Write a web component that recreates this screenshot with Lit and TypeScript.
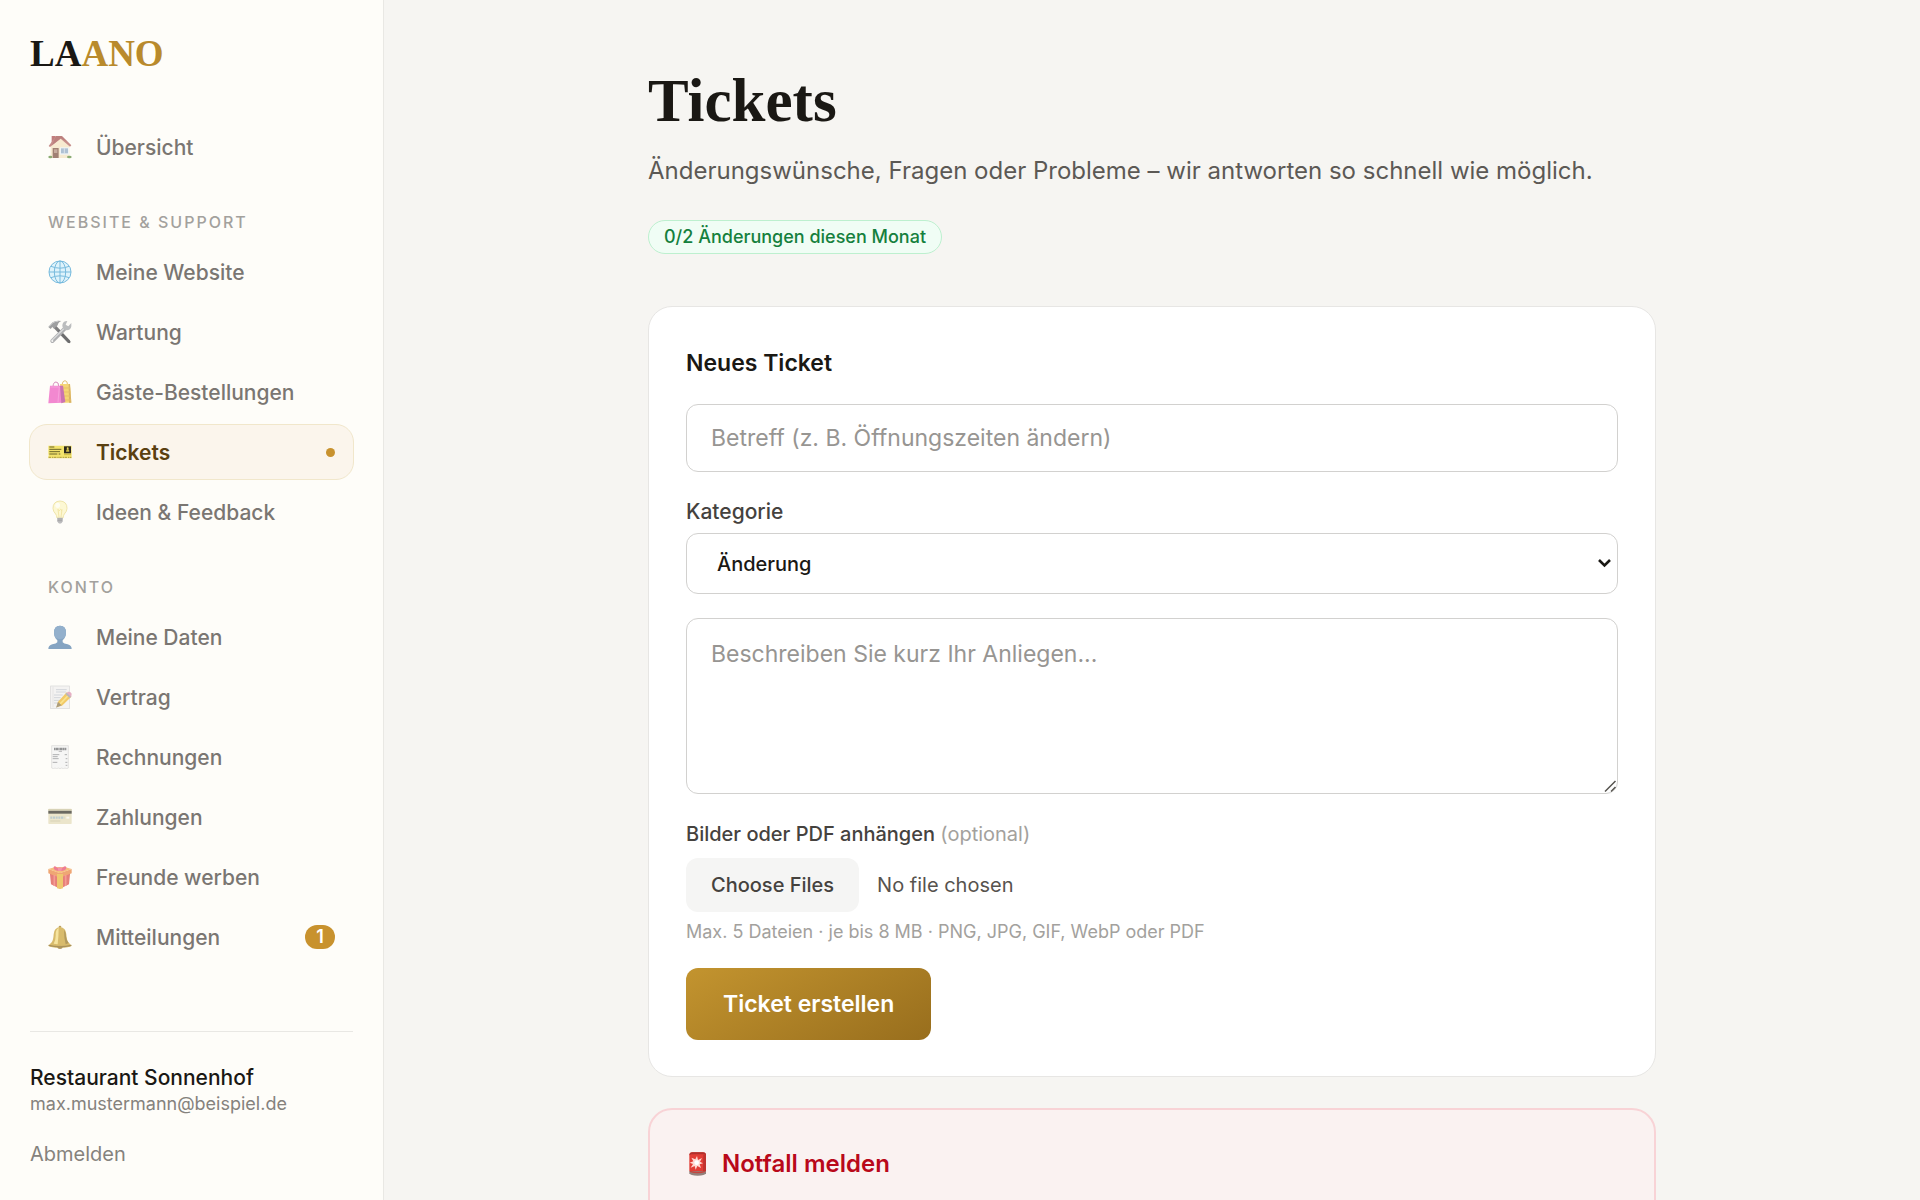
import { LitElement, html, svg, css, nothing, type SVGTemplateResult } from "lit";
import { customElement, property } from "lit/decorators.js";
import { classMap } from "lit/directives/class-map.js";

interface NavEntry {
  label: string;
  icon: string;
  href: string;
  active?: boolean;
  count?: number;
}

interface NavGroup {
  title?: string;
  entries: NavEntry[];
}

const NAV: NavGroup[] = [
  { entries: [{ label: "Übersicht", icon: "house", href: "#uebersicht" }] },
  {
    title: "Website & Support",
    entries: [
      { label: "Meine Website", icon: "globe", href: "#website" },
      { label: "Wartung", icon: "tools", href: "#wartung" },
      { label: "Gäste-Bestellungen", icon: "bags", href: "#bestellungen" },
      { label: "Tickets", icon: "ticket", href: "#tickets", active: true },
      { label: "Ideen & Feedback", icon: "bulb", href: "#ideen" },
    ],
  },
  {
    title: "Konto",
    entries: [
      { label: "Meine Daten", icon: "person", href: "#daten" },
      { label: "Vertrag", icon: "memo", href: "#vertrag" },
      { label: "Rechnungen", icon: "receipt", href: "#rechnungen" },
      { label: "Zahlungen", icon: "card", href: "#zahlungen" },
      { label: "Freunde werben", icon: "gift", href: "#freunde" },
      { label: "Mitteilungen", icon: "bell", href: "#mitteilungen", count: 1 },
    ],
  },
];

/* Every drawing uses a 72 unit square. */
const ICONS: Record<string, SVGTemplateResult> = {
  house: svg`
    <rect x="11" y="3" width="12" height="22" fill="#a8484a"/>
    <path d="M8 33 37 8l27 25v36H8z" fill="#f5e3c0"/>
    <path d="M2 33 24 3h18l28 28-4 4L38 11 6 36z" fill="#b0605c"/>
    <path d="M24 3h16L58 20 38 10 12 31z" fill="#a04c4a"/>
    <rect x="14" y="39" width="18" height="30" fill="#7b4e3c"/>
    <rect x="18" y="43" width="10" height="11" fill="#b08a78"/>
    <rect x="36" y="37" width="27" height="22" fill="#e9f0f6"/>
    <rect x="39" y="40" width="21" height="15" fill="#8fa9c4"/>
    <path d="M49 40v15" stroke="#e9f0f6" stroke-width="2"/>
    <ellipse cx="7" cy="66" rx="6" ry="4" fill="#5d8a3c"/>
    <ellipse cx="64" cy="66" rx="7" ry="4" fill="#5d8a3c"/>`,
  globe: svg`
    <circle cx="36" cy="36" r="33" fill="#d3effc"/>
    <g fill="none" stroke="#3f9fd2" stroke-width="3">
      <circle cx="36" cy="36" r="33"/>
      <ellipse cx="36" cy="36" rx="17" ry="33"/>
      <path d="M36 3v66M3 36h66M9 19q27 11 54 0M9 53q27-11 54 0"/>
    </g>`,
  tools: svg`
    <path d="M20 20 62 64" stroke="#4a4b4e" stroke-width="10" stroke-linecap="round"/>
    <path d="M34 34 64 66" stroke="#2f3032" stroke-width="7" stroke-linecap="round"/>
    <path d="M1 21 14 7Q24 0 40 3 30 7 29 16L18 26l-5-5-5 6z" fill="#77797c"/>
    <path d="M3 20 15 8q7-5 16-4" fill="none" stroke="#b9bbbe" stroke-width="3"/>
    <path d="M51 25 13 63" stroke="#8d8f93" stroke-width="12" stroke-linecap="round"/>
    <path d="M49 25 12 61" stroke="#c9cbce" stroke-width="4" stroke-linecap="round"/>
    <path d="M58 3Q44 3 43 16q0 14 13 15 12 0 14-12V9l-9 10-8-5z" fill="#a0a2a6"/>
    <circle cx="13" cy="63" r="3" fill="#f2f2f2"/>`,
  bags: svg`
    <path d="M42 14q2-12 9-12t8 13" fill="none" stroke="#d7a73f" stroke-width="3"/>
    <path d="M36 12h30l4 56H44z" fill="#f2c53d"/>
    <path d="M62 12h4l4 56h-7z" fill="#c9952a"/>
    <path d="M44 24h22M45 36h22M47 48h21M48 60h21" stroke="#dfa529" stroke-width="3"/>
    <path d="M15 20q1-14 9-14t8 12" fill="none" stroke="#c45fa4" stroke-width="3"/>
    <path d="M6 17h35l2 51-42 2z" fill="#ee58c0"/>
    <path d="M36 17h9l7 49-12 4z" fill="#b53a93"/>
    <path d="M8 21h26l-4 45" fill="none" stroke="#f78dd6" stroke-width="2"/>`,
  ticket: svg`
    <path d="M1 17h70v8q-3 3 0 6v24H1v-6q3-3 0-6z" fill="#f3e36c"/>
    <path d="M4 21h15M4 28h36M4 35h32M4 42h24M32 42h5" stroke="#6b6528" stroke-width="3"/>
    <rect x="48" y="19" width="21" height="21" fill="#2b281f"/>
    <path d="M54 35q0-7 5-9 6 2 5 9z" fill="#c9b646"/>
    <circle cx="59" cy="25" r="3" fill="#e8d556"/>
    <path d="M2 52h68" stroke="#ab9a40" stroke-width="3" stroke-dasharray="7 3 4 2"/>
    <path d="M48 44h21" stroke="#cdb93f" stroke-width="3"/>`,
  bulb: svg`
    <path d="M36 3q21 1 21 22 0 9-8 17-3 4-4 12H27q-1-8-4-12-8-8-8-17Q15 4 36 3z" fill="#fdf6c4" stroke="#eadb8a" stroke-width="3"/>
    <path d="M30 28 33 51M42 28 39 51M30 28l4 4 4-4 4 4" fill="none" stroke="#e7cf62" stroke-width="2"/>
    <ellipse cx="29" cy="16" rx="7" ry="8" fill="#fffef0"/>
    <path d="M28 53h16v11q-2 7-8 7t-8-7z" fill="#a2a3a6"/>
    <path d="M28 57h16M28 62h15" stroke="#6f7073" stroke-width="2"/>`,
  person: svg`
    <path d="M36 2q18 0 18 21 0 13-10 23v6q3 4 15 6 12 3 12 14H1q0-11 12-14 12-2 15-6v-6Q18 36 18 23 18 2 36 2z" fill="#527fab"/>
    <path d="M36 2q18 0 18 21 0 10-6 17-12 5-24 0-6-7-6-17Q18 2 36 2z" fill="#6690b9"/>`,
  memo: svg`
    <rect x="8" y="3" width="56" height="68" fill="#f0f0f0" stroke="#c8c8c9" stroke-width="2"/>
    <path d="M24 14h32M24 21h30M18 30h26M18 38h20M18 46h18M18 54h14" stroke="#a9b1be" stroke-width="2"/>
    <path d="M15 5v62" stroke="#dcdcdc" stroke-width="3"/>
    <path d="m26 66 4-16 26-28 14 13-28 27z" fill="#eeb52a"/>
    <path d="m36 57 26-27" stroke="#f9da62" stroke-width="5"/>
    <path d="m55 25 5-5q8-1 11 6l-1 8-4 4z" fill="#dc8fae"/>
    <path d="m52 27 4-4 13 12-4 4z" fill="#9c9ca2"/>
    <path d="m24 68 6-17 11 10z" fill="#8a7549"/>`,
  receipt: svg`
    <path d="M11 2h50v67l-5 2-5-2-5 2-5-2-5 2-5-2-5 2-5-2-5 2-5-2z" fill="#f4f4f4" stroke="#c9c9c9" stroke-width="2"/>
    <path d="M18 12h37" stroke="#66686c" stroke-width="8" stroke-dasharray="4 1 7 1"/>
    <path d="M32 19h10" stroke="#9a9b9e" stroke-width="3"/>
    <path d="M14 29h20M14 35h15M14 41h18M14 52h14M50 29h7M53 41h5M52 52h6M53 61h5" stroke="#8e9093" stroke-width="3"/>`,
  card: svg`
    <rect x="1" y="11" width="70" height="46" rx="2" fill="#e3dcb8"/>
    <rect x="1" y="17" width="70" height="9" fill="#2c2b22"/>
    <path d="M1 14h70" stroke="#c9c29c" stroke-width="4"/>
    <path d="M7 38h42" stroke="#a2b9bf" stroke-width="7" stroke-dasharray="6 2"/>
    <path d="M55 35h9v6h-9z" fill="#f7f6ee"/>
    <path d="M7 48h30" stroke="#c7c09a" stroke-width="3"/>`,
  gift: svg`
    <path d="M5 19 36 34 67 19l-4 39L36 71 9 58z" fill="#dc4a44"/>
    <path d="M1 12 36 24 71 12v13L36 38 1 25z" fill="#e9823c"/>
    <path d="M1 12 22 6h28l21 6-35 13z" fill="#f3a64c"/>
    <path d="M27 27h18v43l-9 2-9-2z" fill="#e9b236"/>
    <path d="M19 30v33M53 30v33" stroke="#f2736a" stroke-width="5"/>
    <path d="M34 15Q20-2 17 7q-1 9 17 11zM37 15Q51-2 55 7q1 9-17 11z" fill="#e8486c"/>
    <rect x="30" y="7" width="11" height="11" rx="3" fill="#f06a85"/>`,
  bell: svg`
    <circle cx="36" cy="6" r="4" fill="#a47e22"/>
    <path d="M36 6q18 2 19 22 1 18 6 24l10 10q-8 6-35 6T1 62l10-10q5-6 6-24Q18 8 36 6z" fill="#c9a031"/>
    <path d="M32 9Q22 14 23 32q0 14-6 24l12 2q3-26 3-49z" fill="#f3da78"/>
    <path d="M48 14q6 8 6 20 1 12 8 20l-9 4q-5-18-5-44z" fill="#93701c"/>
    <path d="M2 61q34 8 68 0" stroke="#866419" stroke-width="4" fill="none"/>
    <ellipse cx="36" cy="67" rx="8" ry="5" fill="#8d6a1c"/>`,
  siren: svg`
    <path d="M10 10q0-9 9-9h32q9 0 9 9v48H10z" fill="#e23d35"/>
    <path d="M10 10q0-9 9-9h32q9 0 9 9l-6-3H16z" fill="#b0302c"/>
    <path d="M52 8h8v50h-9z" fill="#c0332f"/>
    <path d="m33 12 3 12 12-6-6 11 9 5-10 3 4 11-11-6-5 11-3-11-12 5 7-11-10-4 11-4-6-11 12 5z" fill="#ffd9d2"/>
    <circle cx="32" cy="32" r="7" fill="#fff"/>
    <path d="M10 57h50v7q-3 7-25 7t-25-7z" fill="#94807b"/>
    <path d="M12 58q23 7 46 0" stroke="#c4453d" stroke-width="4" fill="none"/>`,
};

@customElement("emoji-icon")
export class EmojiIcon extends LitElement {
  static styles = css`
    :host {
      display: block;
      flex: none;
      width: 24px;
      height: 24px;
    }
    .drawing {
      display: block;
      width: 100%;
      height: 100%;
    }
  `;

  @property() name = "";

  render() {
    return html`<svg class="drawing" viewBox="0 0 72 72" aria-hidden="true">${ICONS[this.name]}</svg>`;
  }
}

@customElement("side-nav")
export class SideNav extends LitElement {
  static styles = css`
    :host {
      display: flex;
      flex-direction: column;
      box-sizing: border-box;
      padding: 32px 30px;
      background: #fefdf9;
      border-right: 1px solid #e9e8e4;
      overflow: hidden;
    }
    a {
      color: inherit;
      text-decoration: none;
    }
    .logo {
      font: 700 37px/44px "Liberation Serif", serif;
      color: #1a1814;
    }
    .logo-accent {
      color: #b98a2c;
    }
    .nav {
      display: flex;
      flex-direction: column;
      gap: 4px;
      margin-top: 43px;
    }
    .group-title {
      margin: 0;
      padding: 32px 18px 7px;
      font-size: 16px;
      line-height: 22px;
      font-weight: 500;
      letter-spacing: 2px;
      text-transform: uppercase;
      color: #a3a19d;
    }
    .entry {
      display: flex;
      align-items: center;
      gap: 24px;
      box-sizing: border-box;
      height: 56px;
      margin: 0 -1px;
      padding: 0 18px;
      border: 1px solid transparent;
      border-radius: 18px;
      font-size: 21px;
      font-weight: 500;
      color: #7a7672;
    }
    .entry emoji-icon {
      opacity: 0.7;
    }
    .entry.active {
      background: #fbf5ec;
      border-color: #f1e7cb;
      color: #5a4010;
      font-weight: 600;
    }
    .entry.active emoji-icon {
      opacity: 1;
    }
    .label {
      flex: 1;
    }
    .dot {
      width: 9px;
      height: 9px;
      border-radius: 50%;
      background: #c8922e;
    }
    .count {
      min-width: 30px;
      border-radius: 12px;
      background: #c8922e;
      color: #fff;
      font-size: 18px;
      font-weight: 600;
      line-height: 24px;
      text-align: center;
    }
    .account {
      margin-top: auto;
      padding-top: 32px;
      border-top: 1px solid #e9e8e4;
      display: flex;
      flex-direction: column;
      align-items: flex-start;
    }
    .account-name {
      font-size: 21px;
      line-height: 28px;
      font-weight: 500;
      color: #1a1814;
    }
    .account-mail {
      font-size: 18px;
      line-height: 24px;
      color: #85827d;
    }
    .logout {
      margin-top: 24px;
      padding: 0;
      border: 0;
      background: none;
      font: inherit;
      font-size: 20px;
      line-height: 28px;
      color: #85827d;
      cursor: pointer;
    }
  `;

  private renderEntry(entry: NavEntry) {
    return html`<a
      class=${classMap({ entry: true, active: !!entry.active })}
      href=${entry.href}
      aria-current=${entry.active ? "page" : nothing}
    >
      <emoji-icon name=${entry.icon}></emoji-icon>
      <span class="label">${entry.label}</span>
      ${entry.active ? html`<span class="dot"></span>` : nothing}
      ${entry.count ? html`<span class="count">${entry.count}</span>` : nothing}
    </a>`;
  }

  render() {
    return html`
      <a class="logo" href="#">LA<span class="logo-accent">ANO</span></a>
      <nav class="nav">
        ${NAV.map(
          (group) => html`
            ${group.title ? html`<h2 class="group-title">${group.title}</h2>` : nothing}
            ${group.entries.map((entry) => this.renderEntry(entry))}
          `,
        )}
      </nav>
      <footer class="account">
        <span class="account-name">Restaurant Sonnenhof</span>
        <span class="account-mail">max.mustermann@beispiel.de</span>
        <button class="logout" type="button">Abmelden</button>
      </footer>
    `;
  }
}

@customElement("ticket-form")
export class TicketForm extends LitElement {
  static styles = css`
    :host {
      display: block;
    }
    .form {
      display: flex;
      flex-direction: column;
      gap: 24px;
      padding: 39px 37px 36px;
      border: 1px solid #e7e6e4;
      border-radius: 24px;
      background: #fff;
    }
    .title {
      margin: 0;
      font-size: 23px;
      line-height: 34px;
      font-weight: 600;
      color: #1a1814;
    }
    .control {
      display: block;
      box-sizing: border-box;
      width: 100%;
      margin: 0;
      padding: 0 24px;
      border: 1px solid #d2d1cf;
      border-radius: 12px;
      background: #fff;
      color: #1a1814;
      font: 400 23px/34px Inter, sans-serif;
    }
    .control::placeholder {
      color: #979592;
      opacity: 1;
    }
    .subject {
      height: 68px;
    }
    .category {
      height: 61px;
      padding: 0 30px;
      font-size: 20px;
      font-weight: 500;
      appearance: none;
    }
    .message {
      height: 176px;
      padding: 18px 24px;
      resize: vertical;
    }
    .message::-webkit-resizer {
      background: transparent;
    }
    .field {
      display: flex;
      flex-direction: column;
      gap: 5px;
    }
    .attachments {
      gap: 8px;
    }
    .label {
      font-size: 21px;
      line-height: 32px;
      font-weight: 500;
      color: #45423e;
    }
    .attachments .label {
      font-size: 20px;
    }
    .optional {
      font-weight: 400;
      color: #a3a19d;
    }
    .wrap {
      position: relative;
    }
    .chevron,
    .grip {
      position: absolute;
      pointer-events: none;
      fill: none;
    }
    .chevron {
      right: 6px;
      top: 22px;
      width: 15px;
      height: 15px;
    }
    .grip {
      right: 1px;
      bottom: 1px;
      width: 13px;
      height: 13px;
    }
    .files {
      height: 54px;
      font: 400 20px/54px Inter, sans-serif;
      color: #57534e;
    }
    .files::file-selector-button {
      height: 54px;
      margin: 0 18px 0 0;
      padding: 0 25px;
      border: 0;
      border-radius: 12px;
      background: #f5f5f4;
      color: #45423e;
      font: 500 20px/54px Inter, sans-serif;
    }
    .hint {
      margin: 0;
      font-size: 18px;
      line-height: 24px;
      color: #a3a19d;
    }
    .submit {
      align-self: flex-start;
      height: 72px;
      padding: 0 37px;
      border: 0;
      border-radius: 12px;
      background: linear-gradient(150deg, #c3942f, #986e1d);
      color: #fff;
      font: 600 23px/36px Inter, sans-serif;
      cursor: pointer;
    }
  `;

  render() {
    return html`
      <form class="form">
        <h2 class="title">Neues Ticket</h2>
        <input class="control subject" type="text" placeholder="Betreff (z. B. Öffnungszeiten ändern)" aria-label="Betreff" />
        <div class="field">
          <label class="label" for="category">Kategorie</label>
          <div class="wrap">
            <select class="control category" id="category">
              <option>Änderung</option>
            </select>
            <svg class="chevron" viewBox="0 0 15 15" aria-hidden="true">
              <path d="m2 5 5.5 5.5L13 5" stroke="#1a1814" stroke-width="2.6" />
            </svg>
          </div>
        </div>
        <div class="wrap">
          <textarea class="control message" placeholder="Beschreiben Sie kurz Ihr Anliegen..." aria-label="Anliegen"></textarea>
          <svg class="grip" viewBox="0 0 26 26" aria-hidden="true">
            <path d="M2 23 23 2M14 23l9-9" stroke="#55534f" stroke-width="3" />
          </svg>
        </div>
        <div class="field attachments">
          <label class="label" for="files">Bilder oder PDF anhängen <span class="optional">(optional)</span></label>
          <input class="files" id="files" type="file" multiple />
          <p class="hint">Max. 5 Dateien · je bis 8 MB · PNG, JPG, GIF, WebP oder PDF</p>
        </div>
        <button class="submit" type="button">Ticket erstellen</button>
      </form>
    `;
  }
}

@customElement("app-root")
export class AppRoot extends LitElement {
  static styles = css`
    :host {
      display: grid;
      grid-template-columns: 384px minmax(0, 1fr);
      height: 100vh;
      background: #f6f5f2;
      font-family: Inter, sans-serif;
    }
    .main {
      overflow-y: auto;
      scrollbar-width: none;
      padding: 71px 48px 48px;
    }
    .column {
      display: flex;
      flex-direction: column;
      max-width: 1008px;
      margin: 0 auto;
    }
    .heading {
      margin: 0;
      font: 700 61px/60px "Liberation Serif", serif;
      color: #1a1814;
    }
    .lead {
      margin: 22px 0 0;
      font-size: 24px;
      line-height: 36px;
      color: #5c5955;
    }
    .quota {
      align-self: flex-start;
      margin: 31px 0 52px;
      padding: 0 15px;
      border: 1px solid #bdf0cf;
      border-radius: 17px;
      background: #f0fdf5;
      color: #15803d;
      font-size: 18px;
      line-height: 32px;
      font-weight: 500;
    }
    .emergency {
      margin-top: 31px;
      padding: 36px 36px 72px;
      border: 2px solid #f8d3d6;
      border-radius: 24px;
      background: #faf2f1;
    }
    .emergency-title {
      display: flex;
      align-items: center;
      gap: 12px;
      margin: 0;
      font-size: 24px;
      line-height: 36px;
      font-weight: 600;
      color: #b9091a;
    }
  `;

  render() {
    return html`
      <side-nav></side-nav>
      <main class="main">
        <div class="column">
          <h1 class="heading">Tickets</h1>
          <p class="lead">Änderungswünsche, Fragen oder Probleme – wir antworten so schnell wie möglich.</p>
          <span class="quota">0/2 Änderungen diesen Monat</span>
          <ticket-form></ticket-form>
          <section class="emergency">
            <h2 class="emergency-title"><emoji-icon name="siren"></emoji-icon>Notfall melden</h2>
          </section>
        </div>
      </main>
    `;
  }
}
